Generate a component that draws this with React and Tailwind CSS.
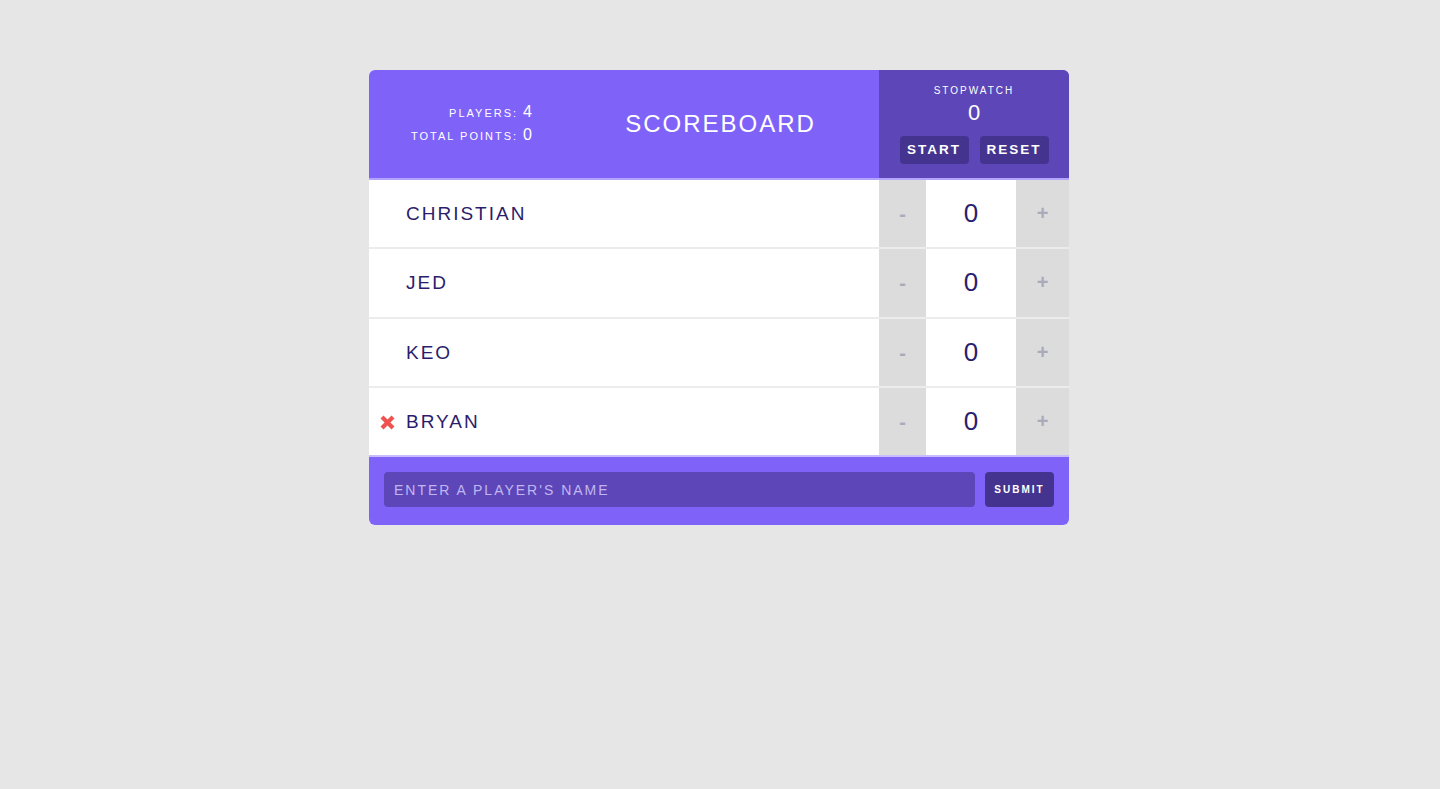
import React, { useState } from 'react';

const players = [
    { id: 1, name: 'Christian', score: 0 },
    { id: 2, name: 'Jed', score: 0 },
    { id: 3, name: 'Keo', score: 0 },
    { id: 4, name: 'Bryan', score: 0, hover: true },
];

const Cross = () => (
    <svg width="17" height="17" viewBox="0 0 17 17" className="shrink-0">
        <path d="M3 3 L14 14 M14 3 L3 14" stroke="#ee5350" strokeWidth="4.2" strokeLinecap="butt" />
    </svg>
);

const PlayerRow = ({ player, last }) => (
    <div className={`flex h-[69.33px] ${last ? 'border-b-2 border-[#c9bcfc]' : 'border-b-2 border-[#ececec]'}`}>
        <div className="flex-1 flex items-center pl-[10px] pt-[1px]">
            <div className="w-[27px] flex items-center">{player.hover && <Cross />}</div>
            <span className="text-[19px] tracking-[2px] uppercase text-[#2b1d6c]">{player.name}</span>
        </div>
        <div className="flex w-[190px]">
            <button className="w-[47px] bg-[#dcdcdc] text-[#abaabb] text-[20px] font-bold flex items-center justify-center pt-[1px]">-</button>
            <div className="w-[90px] bg-white flex items-center justify-center text-[26px] text-[#2b1d6c]">{player.score}</div>
            <button className="flex-1 bg-[#dcdcdc] text-[#abaabb] text-[20px] font-bold flex items-center justify-center pb-[1px]">+</button>
        </div>
    </div>
);

export default function App() {
    const [name, setName] = useState('');

    return (
        <div className="min-h-screen bg-[#e6e6e6] pt-[70px] pr-[2px] font-['Liberation_Sans',Arial,sans-serif]">
            <div className="mx-auto w-[700px] rounded-md overflow-hidden bg-white">
                {/* Header */}
                <header className="flex h-[110px] bg-[#7f63f9] border-b-2 border-[#b4a5fc]">
                    <div className="w-[163px] flex flex-col items-end justify-center pb-[1px] text-white">
                        <div className="flex items-baseline gap-[5px] leading-[22px]">
                            <span className="text-[11px] tracking-[2px]">PLAYERS:</span>
                            <span className="text-[16px]">4</span>
                        </div>
                        <div className="flex items-baseline gap-[5px] leading-[22px]">
                            <span className="text-[11px] tracking-[2px]">TOTAL POINTS:</span>
                            <span className="text-[16px]">0</span>
                        </div>
                    </div>
                    <div className="flex-1 flex items-center justify-center pl-[30px] pb-[1px]">
                        <h1 className="text-[24px] tracking-[2px] text-white">SCOREBOARD</h1>
                    </div>
                    <div className="w-[190px] bg-[#5c46b8] flex flex-col items-center pt-[16px]">
                        <span className="text-[10px] tracking-[2px] text-white leading-none">STOPWATCH</span>
                        <span className="text-[22px] text-white leading-none mt-[6px]">0</span>
                        <div className="flex gap-[11px] mt-[12px]">
                            <button className="w-[69px] h-[28px] rounded-[4px] bg-[#44348f] text-white text-[13.5px] font-bold tracking-[2px]">START</button>
                            <button className="w-[69px] h-[28px] rounded-[4px] bg-[#44348f] text-white text-[13.5px] font-bold tracking-[2px]">RESET</button>
                        </div>
                    </div>
                </header>

                {/* Players */}
                {players.map((p, i) => (
                    <PlayerRow key={p.id} player={p} last={i === players.length - 1} />
                ))}

                {/* Add player form */}
                <form className="flex gap-[10px] bg-[#7f63f9] px-[15px] pt-[15px] pb-[18px]" onSubmit={(e) => e.preventDefault()}>
                    <input
                        value={name}
                        onChange={(e) => setName(e.target.value)}
                        placeholder="ENTER A PLAYER'S NAME"
                        className="flex-1 h-[35px] rounded-[4px] bg-[#5c46b8] px-[10px] text-[14px] tracking-[2px] text-white placeholder:text-[#c2b6f2] outline-none"
                    />
                    <button className="w-[69px] h-[35px] rounded-[4px] bg-[#44348f] text-white text-[10px] font-bold tracking-[2px]">SUBMIT</button>
                </form>
            </div>
        </div>
    );
}
